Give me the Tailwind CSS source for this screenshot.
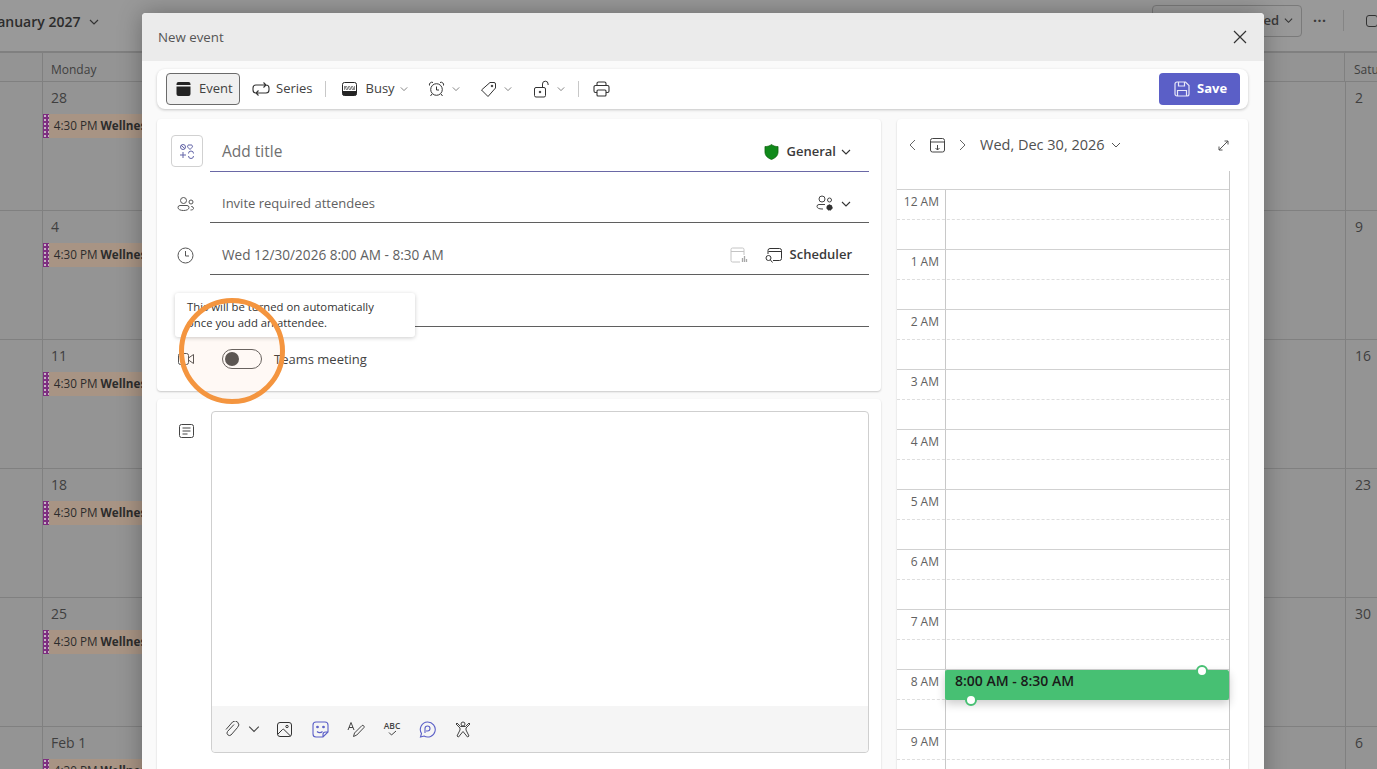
<!DOCTYPE html>
<html><head><meta charset="utf-8"><script src="https://cdn.jsdelivr.net/npm/@tailwindcss/browser@4"></script></head>
<body class="m-0">
<div class="relative w-[1377px] h-[769px] overflow-hidden bg-[#949494] font-['Open_Sans',sans-serif] text-[#3a3a3a]">
  <!-- Calendar behind -->
  <div class="h-[53px] bg-[#999999] border-b-[2px] border-[#808080] flex items-center relative">
    <div class="ml-[-7px] text-[14px] font-semibold text-[#2c2c2c] pb-[9px]">January 2027</div>
    <svg class="ml-[9px] mb-[7px]" width="10" height="10" viewBox="0 0 10 10" fill="none" stroke="#333" stroke-width="1.2"><path d="M1 3l4 4 4-4"/></svg>
    <div class="ml-auto mb-[10px] mr-[75px] w-[150px] h-[32px] border border-[#7a7a7a] rounded-[4px] flex items-center justify-end pr-[8px] gap-[5px] text-[13px] font-semibold">ed<svg width="9" height="9" viewBox="0 0 10 10" fill="none" stroke="#333" stroke-width="1.2"><path d="M1 3l4 4 4-4"/></svg></div>
    <div class="absolute left-[1313px] top-[10px] font-bold text-[14px] tracking-[0.5px]">···</div>
    <div class="absolute left-[1343px] top-[10px] w-px h-[21px] bg-[#858585]"></div>
    <div class="absolute left-[1366px] top-[15px] w-[12px] h-[12px] rounded-[3px] border-[1.5px] border-[#333]"></div>
  </div>
  <div class="grid grid-cols-[43px_repeat(5,260.4px)_1fr] h-[29px] border-b border-[#808080] text-[12px] text-[#3f3f3f]">
    <div class="border-r border-[#808080]"></div>
    <div class="pl-[8px] pt-[8px]">Monday</div>
    <div></div><div></div><div></div>
    <div class="border-r border-[#808080]"></div>
    <div class="pl-[9px] pt-[8px]">Saturday</div>
  </div>
  <div class="grid grid-cols-[43px_1302px_1fr] auto-rows-[129px] text-[14px] text-[#3f3f3f]">
    <div class="border-r border-b border-[#808080]"></div>
    <div class="border-b border-[#808080] pl-[8px] pt-[5px]">28<div class="ml-[-8px] mt-[6px] h-[24px] w-[100px] flex bg-[#a89484] text-[11.700px] text-[#2c2c2c] items-center"><i class="w-[6px] h-full bg-[#7e2f80] [background-image:radial-gradient(#c4b4c4_1px,transparent_1.3px)] [background-size:4px_4px]"></i><span class="pl-[5px] whitespace-nowrap overflow-hidden">4:30 PM <b>Wellnes</b></span></div></div>
    <div class="border-l border-b border-[#808080] pl-[9px] pt-[5px]">2</div>
    <div class="border-r border-b border-[#808080]"></div>
    <div class="border-b border-[#808080] pl-[8px] pt-[5px]">4<div class="ml-[-8px] mt-[6px] h-[24px] w-[100px] flex bg-[#a89484] text-[11.700px] text-[#2c2c2c] items-center"><i class="w-[6px] h-full bg-[#7e2f80] [background-image:radial-gradient(#c4b4c4_1px,transparent_1.3px)] [background-size:4px_4px]"></i><span class="pl-[5px] whitespace-nowrap overflow-hidden">4:30 PM <b>Wellnes</b></span></div></div>
    <div class="border-l border-b border-[#808080] pl-[9px] pt-[5px]">9</div>
    <div class="border-r border-b border-[#808080]"></div>
    <div class="border-b border-[#808080] pl-[8px] pt-[5px]">11<div class="ml-[-8px] mt-[6px] h-[24px] w-[100px] flex bg-[#a89484] text-[11.700px] text-[#2c2c2c] items-center"><i class="w-[6px] h-full bg-[#7e2f80] [background-image:radial-gradient(#c4b4c4_1px,transparent_1.3px)] [background-size:4px_4px]"></i><span class="pl-[5px] whitespace-nowrap overflow-hidden">4:30 PM <b>Wellnes</b></span></div></div>
    <div class="border-l border-b border-[#808080] pl-[9px] pt-[5px]">16</div>
    <div class="border-r border-b border-[#808080]"></div>
    <div class="border-b border-[#808080] pl-[8px] pt-[5px]">18<div class="ml-[-8px] mt-[6px] h-[24px] w-[100px] flex bg-[#a89484] text-[11.700px] text-[#2c2c2c] items-center"><i class="w-[6px] h-full bg-[#7e2f80] [background-image:radial-gradient(#c4b4c4_1px,transparent_1.3px)] [background-size:4px_4px]"></i><span class="pl-[5px] whitespace-nowrap overflow-hidden">4:30 PM <b>Wellnes</b></span></div></div>
    <div class="border-l border-b border-[#808080] pl-[9px] pt-[5px]">23</div>
    <div class="border-r border-b border-[#808080]"></div>
    <div class="border-b border-[#808080] pl-[8px] pt-[5px]">25<div class="ml-[-8px] mt-[6px] h-[24px] w-[100px] flex bg-[#a89484] text-[11.700px] text-[#2c2c2c] items-center"><i class="w-[6px] h-full bg-[#7e2f80] [background-image:radial-gradient(#c4b4c4_1px,transparent_1.3px)] [background-size:4px_4px]"></i><span class="pl-[5px] whitespace-nowrap overflow-hidden">4:30 PM <b>Wellnes</b></span></div></div>
    <div class="border-l border-b border-[#808080] pl-[9px] pt-[5px]">30</div>
    <div class="border-r border-[#808080]"></div>
    <div class="pl-[8px] pt-[5px]">Feb 1<div class="ml-[-8px] mt-[6px] h-[24px] w-[100px] flex bg-[#a89484] text-[11.700px] text-[#2c2c2c] items-center"><i class="w-[6px] h-full bg-[#7e2f80] [background-image:radial-gradient(#c4b4c4_1px,transparent_1.3px)] [background-size:4px_4px]"></i><span class="pl-[5px] whitespace-nowrap overflow-hidden">4:30 PM <b>Wellnes</b></span></div></div>
    <div class="border-l border-[#808080] pl-[9px] pt-[5px]">6</div>
  </div>

  <!-- Dialog -->
  <div class="absolute left-[142px] top-[13px] w-[1122px] h-[800px] bg-[#fafafa] rounded-t-[4px] shadow-[0_0_24px_rgba(0,0,0,0.3)] flex flex-col">
    <div class="h-[48px] bg-[#ebebeb] rounded-t-[4px] flex items-center justify-between pl-[16px] pr-[16px] shrink-0">
      <span class="text-[13.3px] text-[#555] pt-[1px]">New event</span>
      <svg width="16" height="16" viewBox="0 0 16 16" fill="none" stroke="#333" stroke-width="1.2"><path d="M2 2l12 12M14 2L2 14"/></svg>
    </div>
    <div class="ml-[15px] mr-[16px] mt-[8px] h-[40px] bg-white rounded-[8px] shadow-[0_1px_3px_rgba(0,0,0,0.22)] flex items-center pl-[9px] pr-[8px] text-[13px] text-[#424242] shrink-0">
      <div class="w-[74px] h-[32px] bg-[#f0f0f0] border border-[#6b6b6b] rounded-[4px] flex items-center pl-[9px] gap-[8px]">
        <svg width="15" height="16" viewBox="0 0 15 16" fill="#242424"><path d="M2.5 1h10A2 2 0 0 1 14.5 3v1H.5V3A2 2 0 0 1 2.5 1zM.5 5.5h14V13a2 2 0 0 1-2 2h-10a2 2 0 0 1-2-2z"/></svg>
        <span>Event</span>
      </div>
      <svg class="ml-[12px]" width="18" height="16" viewBox="0 0 18 16" fill="none" stroke="#333" stroke-width="1.1"><path d="M5 12H4a3 3 0 0 1-3-3V7a3 3 0 0 1 3-3h10M11.500 1.500L14 4l-2.500 2.500M13 4h1a3 3 0 0 1 3 3v2a3 3 0 0 1-3 3H4M6.500 9.500L4 12l2.500 2.500"/></svg>
      <span class="ml-[6px]">Series</span>
      <i class="ml-[12px] w-px h-[16px] bg-[#c8c8c8]"></i>
      <svg class="ml-[16px]" width="15" height="14" viewBox="0 0 15 14" fill="none"><rect x=".5" y=".5" width="14" height="13" rx="2" fill="#fff" stroke="#242424"/><path d="M.5 9h14v3a1.500 1.500 0 0 1-1.500 1.500H2A1.500 1.500 0 0 1 .5 12z" fill="#242424"/><path d="M2 4h11v4H2z" fill="#888"/><path d="M3 8l3-4M6 8l3-4M9 8l3-4" stroke="#fff"/></svg>
      <span class="ml-[9px]">Busy</span>
      <svg class="ml-[5px]" width="8" height="8" viewBox="0 0 10 10" fill="none" stroke="#666"><path d="M1 3l4 4 4-4"/></svg>
      <svg class="ml-[20px]" width="17" height="16" viewBox="0 0 17 16" fill="none" stroke="#333"><circle cx="8.500" cy="8.500" r="5.800"/><path d="M8.500 5.500v3.500h2.500M1.500 4.500A2.500 2.500 0 0 1 5 1.500M15.500 4.500A2.500 2.500 0 0 0 12 1.500M4 13l-1.500 2M13 13l1.500 2"/></svg>
      <svg class="ml-[7px]" width="8" height="8" viewBox="0 0 10 10" fill="none" stroke="#666"><path d="M1 3l4 4 4-4"/></svg>
      <svg class="ml-[20px]" width="17" height="17" viewBox="0 0 17 17" fill="none" stroke="#333"><path d="M10 1.500h4a1.500 1.500 0 0 1 1.500 1.500v4L8 15.500 1.500 9z"/><circle cx="12" cy="5" r=".8" fill="#333"/></svg>
      <svg class="ml-[7px]" width="8" height="8" viewBox="0 0 10 10" fill="none" stroke="#666"><path d="M1 3l4 4 4-4"/></svg>
      <svg class="ml-[22px]" width="16" height="18" viewBox="0 0 16 18" fill="none" stroke="#333"><rect x=".5" y="7.500" width="11" height="9.500" rx="1.500"/><path d="M8.500 7.500V4a2.800 2.800 0 0 1 5.600 0v1"/><circle cx="6" cy="12" r=".8" fill="#333"/></svg>
      <svg class="ml-[7px]" width="8" height="8" viewBox="0 0 10 10" fill="none" stroke="#666"><path d="M1 3l4 4 4-4"/></svg>
      <i class="ml-[13px] w-px h-[16px] bg-[#c8c8c8]"></i>
      <svg class="ml-[14px]" width="17" height="16" viewBox="0 0 17 16" fill="none" stroke="#333" stroke-width="1.100"><path d="M4 4.500V2.500A1.500 1.500 0 0 1 5.500 1h6A1.500 1.500 0 0 1 13 2.500v2M4 11.500H2.500A1.500 1.500 0 0 1 1 10V6a1.500 1.500 0 0 1 1.500-1.500h12A1.500 1.500 0 0 1 16 6v4a1.500 1.500 0 0 1-1.500 1.500H13"/><rect x="4" y="9" width="9" height="6" rx="1"/></svg>
      <div class="ml-auto w-[81px] h-[32px] bg-[#5b5fc7] rounded-[4px] flex items-center pl-[15px] gap-[7px] text-white text-[13px] font-bold">
        <svg width="16" height="16" viewBox="0 0 16 16" fill="none" stroke="#e8e8f8" stroke-width="1.200"><path d="M1 3a2 2 0 0 1 2-2h8.500L15 4.500V13a2 2 0 0 1-2 2H3a2 2 0 0 1-2-2z"/><path d="M4.500 1v4h6V1M3.500 15V9.500h9V15"/></svg>
        <span>Save</span>
      </div>
    </div>
    <div class="flex gap-[16px] ml-[15px] mr-[16px] mt-[10px] flex-1 min-h-0">
      <div class="w-[724px] flex flex-col gap-[8px]">
        <div class="bg-white rounded-[4px] shadow-[0_1px_2px_rgba(0,0,0,0.2)] h-[272px] text-[13px] text-[#616161]">
          <div class="flex h-[53px]">
            <div class="w-[53px] pl-[14px] pt-[16px]"><div class="w-[32px] h-[32px] border border-[#d1d1d1] rounded-[4px] flex items-center justify-center"><svg width="16" height="16" viewBox="0 0 16 16" fill="none" stroke="#6264a7"><circle cx="4" cy="4" r="2.500"/><path d="M2 2.200l4 3.600M11 6.500L8.800 4.200a1.500 1.500 0 0 1 2.200-2 1.500 1.500 0 0 1 2.200 2zM1 12h6M4 9v6M9.500 10.500a2.500 2.500 0 0 1 5 0M14.500 13a2.500 2.500 0 0 1-5 0"/></svg></div></div>
            <div class="flex-1 mr-[12px] border-b border-[#6a68a6] flex items-center pl-[12px] pt-[13px]"><span class="text-[15.5px] text-[#707070]">Add title</span>
              <svg class="ml-auto" width="15" height="18" viewBox="0 0 16 18" fill="#10891a" stroke="#0b5a0b" stroke-width=".7"><path d="M8 1c2 1.500 4 2.200 7 2.200V9c0 4-3 6.500-7 8-4-1.500-7-4-7-8V3.200C4 3.200 6 2.500 8 1z"/></svg>
              <span class="ml-[8px] text-[13px] font-semibold text-[#3a3a3a]">General</span>
              <svg class="ml-[5px] mr-[18px]" width="10" height="10" viewBox="0 0 10 10" fill="none" stroke="#333" stroke-width="1.100"><path d="M1 3l4 4 4-4"/></svg>
            </div>
          </div>
          <div class="flex h-[51px]">
            <div class="w-[53px] flex items-center justify-center pt-[13px]"><svg class="ml-[4px]" width="18" height="16" viewBox="0 0 18 16" fill="none" stroke="#555"><circle cx="6.500" cy="4.500" r="3"/><path d="M1 11.500A2 2 0 0 1 3 9.500h7a2 2 0 0 1 2 2c0 2-2.500 3-5.500 3S1 13.500 1 11.500z"/><circle cx="14" cy="6" r="2"/><path d="M14 10.500h.5a2 2 0 0 1 2 2c0 1-1.500 1.500-3 1.500"/></svg></div>
            <div class="flex-1 mr-[12px] border-b border-[#5f5f5f] flex items-center pl-[12px] pt-[13px]"><span>Invite required attendees</span>
              <svg class="ml-auto" width="19" height="17" viewBox="0 0 19 17" fill="none" stroke="#444"><circle cx="6" cy="4" r="3"/><circle cx="13.500" cy="5" r="2"/><path d="M9 9.500H3a2 2 0 0 0-2 2c0 1.500 2 2.500 5 2.500h1"/><circle cx="13.500" cy="12.500" r="2.700" fill="#333" stroke="#333" stroke-dasharray="1.500 .8"/></svg>
              <svg class="ml-[6px] mr-[18px]" width="10" height="10" viewBox="0 0 10 10" fill="none" stroke="#333" stroke-width="1.100"><path d="M1 3l4 4 4-4"/></svg>
            </div>
          </div>
          <div class="flex h-[52px]">
            <div class="w-[53px] flex items-center justify-center pt-[13px]"><svg class="ml-[4px]" width="17" height="17" viewBox="0 0 17 17" fill="none" stroke="#555"><circle cx="8.500" cy="8.500" r="7.500"/><path d="M8.500 4v5h3.500"/></svg></div>
            <div class="flex-1 mr-[12px] border-b border-[#5f5f5f] flex items-center pl-[12px] pt-[13px]"><span class="text-[13.6px]">Wed 12/30/2026 8:00 AM - 8:30 AM</span>
              <svg class="ml-auto" width="18" height="16" viewBox="0 0 18 16" fill="none" stroke="#c4c4c4"><path d="M10 15H2.500A1.500 1.500 0 0 1 1 13.500v-11A1.500 1.500 0 0 1 2.500 1h10A1.500 1.500 0 0 1 14 2.500V8M1 4.500h13"/><path d="M12.500 15v-4M14.500 15V9M16.500 15v-3" stroke="#a8a8a8" stroke-width="1.300"/></svg>
              <svg class="ml-[17px]" width="17" height="17" viewBox="0 0 17 17" fill="none" stroke="#333"><path d="M3 7V3.500A2 2 0 0 1 5 1.500h9.500a2 2 0 0 1 2 2v8a2 2 0 0 1-2 2H8M3.500 4.500h12.500"/><circle cx="3.500" cy="11" r="2.500"/><path d="M5.500 13l2 2.500"/></svg>
              <span class="ml-[8px] mr-[17px] font-semibold text-[#3a3a3a]">Scheduler</span>
            </div>
          </div>
          <div class="flex h-[52px]"><div class="w-[53px]"></div><div class="flex-1 mr-[12px] border-b border-[#5f5f5f]"></div></div>
          <div class="flex h-[64px]">
            <div class="w-[53px] flex items-center justify-center"><svg class="ml-[4px]" width="16" height="12" viewBox="0 0 16 12" fill="none" stroke="#555"><rect x=".5" y=".5" width="10" height="11" rx="2"/><path d="M10.500 5l5-3.500v9l-5-3.500"/></svg></div>
            <div class="flex-1 flex items-center pl-[12px]">
              <div class="w-[40px] h-[20px] border border-[#616161] rounded-full flex items-center pl-[2px]"><div class="w-[14px] h-[14px] rounded-full bg-[#555]"></div></div>
              <span class="ml-[12px] text-[#424242] pt-[1px]">Teams meeting</span>
            </div>
          </div>
        </div>
        <div class="flex-1 bg-white rounded-t-[4px] shadow-[0_1px_2px_rgba(0,0,0,0.2)] flex pt-[12px]">
          <div class="w-[54px] flex justify-center pt-[13px]"><svg class="ml-[4px]" width="15" height="14" viewBox="0 0 15 14" fill="none" stroke="#444"><rect x=".5" y=".5" width="14" height="13" rx="2"/><path d="M3.500 4h8M3.500 7h8M3.500 10h5"/></svg></div>
          <div class="w-[658px] h-[342px] border border-[#cfcfcf] rounded-[4px] flex flex-col">
            <div class="flex-1"></div>
            <div class="h-[46px] bg-[#f5f5f5] rounded-b-[4px] flex items-center pl-[12px]">
              <svg width="16" height="17" viewBox="0 0 16 17" fill="none" stroke="#444"><path d="M10 3.500L3.500 10.500a2.500 2.500 0 0 0 3.500 3.500l6.500-7.500a3.700 3.700 0 0 0-5-5.500L2 8.500"/></svg>
              <svg class="ml-[8px]" width="12" height="12" viewBox="0 0 10 10" fill="none" stroke="#444" stroke-width=".9"><path d="M1 3l4 4 4-4"/></svg>
              <svg class="ml-[17px]" width="15" height="15" viewBox="0 0 15 15" fill="none" stroke="#333"><rect x=".5" y=".5" width="14" height="14" rx="2.500"/><circle cx="10" cy="4.500" r="1.200"/><path d="M1 12l4.500-4.500a1 1 0 0 1 1.400 0L13.500 14"/></svg>
              <svg class="ml-[20px]" width="17" height="17" viewBox="0 0 17 17" fill="none" stroke="#5b5fc7" stroke-width="1.100"><path d="M11 16H4a3 3 0 0 1-3-3V4a3 3 0 0 1 3-3h9a3 3 0 0 1 3 3v7zM16 11h-2.500A2.500 2.500 0 0 0 11 13.500V16M5 10.500c1.500 1.500 4 1.500 5.500 0"/><circle cx="5.500" cy="6" r=".8" fill="#5b5fc7"/><circle cx="11.500" cy="6" r=".8" fill="#5b5fc7"/></svg>
              <svg class="ml-[18px]" width="18" height="17" viewBox="0 0 18 17" fill="none" stroke="#444"><path d="M1 9l3-7.500L7 9M2 6.500h4M6.500 15.500l1-3.500L15 4.500a1.500 1.500 0 0 1 2 2L9.800 14z"/></svg>
              <div class="ml-[18px] w-[18px] flex flex-col items-center leading-none"><span class="text-[8.500px] font-semibold text-[#444]">ABC</span><svg width="9" height="6" viewBox="0 0 9 6" fill="none" stroke="#444"><path d="M1 2.500l2.500 2.500L8 1"/></svg></div>
              <svg class="ml-[18px]" width="17" height="17" viewBox="0 0 17 17" fill="none" stroke="#5b5fc7" stroke-width="1.100"><path d="M8.500 1a7.500 7.500 0 1 1-3.500 14L1.500 16l1-3.500A7.500 7.500 0 0 1 8.500 1z"/><path d="M6 12V7.500a2.500 2.500 0 1 1 2.500 2.500H7" /></svg>
              <svg class="ml-[19px]" width="16" height="17" viewBox="0 0 16 17" fill="none" stroke="#444"><circle cx="8" cy="3" r="2"/><path d="M2 2l3.500 3.500h5L14 2l1 1-4 4v2l3 6-1.500 1L8 10.500 3.500 16 2 15l3-6V7L1 3z"/></svg>
            </div>
          </div>
        </div>
      </div>
      <div class="flex-1 bg-white rounded-t-[4px] shadow-[0_1px_2px_rgba(0,0,0,0.2)]">
        <div class="h-[52px] flex items-center pl-[11px] text-[#505050]">
          <svg width="9" height="12" viewBox="0 0 9 12" fill="none" stroke="#666"><path d="M7 1L2 6l5 5"/></svg>
          <svg class="ml-[13px]" width="15" height="16" viewBox="0 0 15 16" fill="none" stroke="#444"><rect x=".5" y="1.500" width="14" height="13.500" rx="2"/><path d="M.5 5h14M7.500 8v5M5.500 11l2 2 2-2"/></svg>
          <svg class="ml-[13px]" width="9" height="12" viewBox="0 0 9 12" fill="none" stroke="#666"><path d="M2 1l5 5-5 5"/></svg>
          <span class="ml-[13px] text-[14.500px] font-medium pb-[1px]">Wed, Dec 30, 2026</span>
          <svg class="ml-[6px]" width="10" height="10" viewBox="0 0 10 10" fill="none" stroke="#555"><path d="M1 3l4 4 4-4"/></svg>
          <svg class="ml-auto mr-[19px]" width="11" height="11" viewBox="0 0 11 11" fill="none" stroke="#555"><path d="M6.500 1H10v3.500M10 1L1 10M1 6.500V10h3.500"/></svg>
        </div>
        <div class="w-[333px] border-r border-[#c8c8c8] pt-[18px]">
          <div class="relative">
            <div class="grid grid-cols-[49px_1fr] h-[60px] border-t border-[#d1d1d1] text-[12px] text-[#616161]"><div class="border-r border-[#c8c8c8] text-right pr-[6px] pt-[3px]">12 AM</div><div class="relative"><i class="absolute left-[-49px] right-0 top-[29px] border-t border-dashed border-[#dedede]"></i></div></div>
            <div class="grid grid-cols-[49px_1fr] h-[60px] border-t border-[#d1d1d1] text-[12px] text-[#616161]"><div class="border-r border-[#c8c8c8] text-right pr-[6px] pt-[3px]">1 AM</div><div class="relative"><i class="absolute left-[-49px] right-0 top-[29px] border-t border-dashed border-[#dedede]"></i></div></div>
            <div class="grid grid-cols-[49px_1fr] h-[60px] border-t border-[#d1d1d1] text-[12px] text-[#616161]"><div class="border-r border-[#c8c8c8] text-right pr-[6px] pt-[3px]">2 AM</div><div class="relative"><i class="absolute left-[-49px] right-0 top-[29px] border-t border-dashed border-[#dedede]"></i></div></div>
            <div class="grid grid-cols-[49px_1fr] h-[60px] border-t border-[#d1d1d1] text-[12px] text-[#616161]"><div class="border-r border-[#c8c8c8] text-right pr-[6px] pt-[3px]">3 AM</div><div class="relative"><i class="absolute left-[-49px] right-0 top-[29px] border-t border-dashed border-[#dedede]"></i></div></div>
            <div class="grid grid-cols-[49px_1fr] h-[60px] border-t border-[#d1d1d1] text-[12px] text-[#616161]"><div class="border-r border-[#c8c8c8] text-right pr-[6px] pt-[3px]">4 AM</div><div class="relative"><i class="absolute left-[-49px] right-0 top-[29px] border-t border-dashed border-[#dedede]"></i></div></div>
            <div class="grid grid-cols-[49px_1fr] h-[60px] border-t border-[#d1d1d1] text-[12px] text-[#616161]"><div class="border-r border-[#c8c8c8] text-right pr-[6px] pt-[3px]">5 AM</div><div class="relative"><i class="absolute left-[-49px] right-0 top-[29px] border-t border-dashed border-[#dedede]"></i></div></div>
            <div class="grid grid-cols-[49px_1fr] h-[60px] border-t border-[#d1d1d1] text-[12px] text-[#616161]"><div class="border-r border-[#c8c8c8] text-right pr-[6px] pt-[3px]">6 AM</div><div class="relative"><i class="absolute left-[-49px] right-0 top-[29px] border-t border-dashed border-[#dedede]"></i></div></div>
            <div class="grid grid-cols-[49px_1fr] h-[60px] border-t border-[#d1d1d1] text-[12px] text-[#616161]"><div class="border-r border-[#c8c8c8] text-right pr-[6px] pt-[3px]">7 AM</div><div class="relative"><i class="absolute left-[-49px] right-0 top-[29px] border-t border-dashed border-[#dedede]"></i></div></div>
            <div class="grid grid-cols-[49px_1fr] h-[60px] border-t border-[#d1d1d1] text-[12px] text-[#616161]"><div class="border-r border-[#c8c8c8] text-right pr-[6px] pt-[3px]">8 AM</div><div class="relative"><i class="absolute left-[-49px] right-0 top-[29px] border-t border-dashed border-[#dedede]"></i>
              <div class="absolute left-[-1px] right-0 top-0 h-[30px] bg-[#47c073] rounded-[2px] shadow-[0_4px_10px_rgba(0,0,0,0.2)] pl-[10px] text-[14px] font-semibold text-[#1a1a1a] leading-[22px]">8:00 AM - 8:30 AM
                <i class="absolute left-[20px] bottom-[-6px] w-[12px] h-[12px] rounded-full bg-white border-2 border-[#47c073]"></i>
                <i class="absolute right-[21px] top-[-5px] w-[12px] h-[12px] rounded-full bg-white border-2 border-[#47c073]"></i>
              </div>
            </div></div>
            <div class="grid grid-cols-[49px_1fr] h-[60px] border-t border-[#d1d1d1] text-[12px] text-[#616161]"><div class="border-r border-[#c8c8c8] text-right pr-[6px] pt-[3px]">9 AM</div><div class="relative"><i class="absolute left-[-49px] right-0 top-[29px] border-t border-dashed border-[#dedede]"></i></div></div>
          </div>
        </div>
      </div>
    </div>
  </div>

  <!-- Orange circle annotation -->
  <div class="absolute left-[179px] top-[298px] w-[106px] h-[106px] rounded-full bg-[#f7933e]/5"></div>
  <!-- Tooltip -->
  <div class="absolute left-[175px] top-[293px] w-[240px] h-[44px] bg-white rounded-[3px] shadow-[0_1px_4px_rgba(0,0,0,0.2)] pl-[12px] pt-[6px] text-[11.300px] leading-[16px] text-[#333]">This will be turned on automatically<br>once you add an attendee.</div>
  <div class="absolute left-[179px] top-[298px] w-[106px] h-[106px] rounded-full border-[5px] border-[#f4953f]"></div>
</div>
</body></html>
